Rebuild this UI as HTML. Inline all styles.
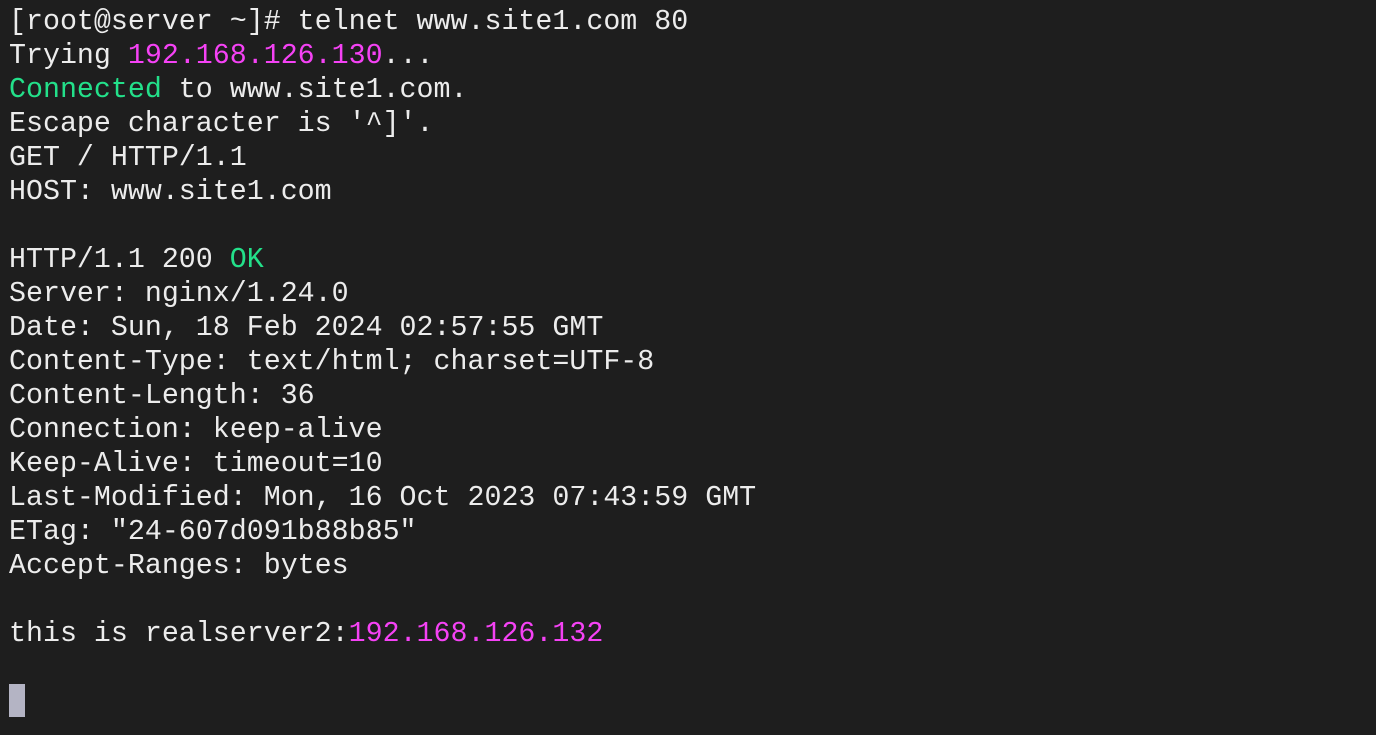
<!DOCTYPE html>
<html><head><style>
html,body{margin:0;padding:0;background:#1e1e1e;width:1376px;height:735px;overflow:hidden}
pre{margin:0;position:absolute;left:9px;top:5px;font-family:"Liberation Mono",monospace;font-size:28.3px;line-height:34px;color:#ececec}
.m{color:#f542f5}.g{color:#23e08a}
.c{position:absolute;left:9px;top:684px;width:16px;height:33px;background:#b4b4c4}
</style></head><body>
<pre>[root@server ~]# telnet www.site1.com 80
Trying <span class="m">192.168.126.130</span>...
<span class="g">Connected</span> to www.site1.com.
Escape character is '^]'.
GET / HTTP/1.1
HOST: www.site1.com

HTTP/1.1 200 <span class="g">OK</span>
Server: nginx/1.24.0
Date: Sun, 18 Feb 2024 02:57:55 GMT
Content-Type: text/html; charset=UTF-8
Content-Length: 36
Connection: keep-alive
Keep-Alive: timeout=10
Last-Modified: Mon, 16 Oct 2023 07:43:59 GMT
ETag: "24-607d091b88b85"
Accept-Ranges: bytes

this is realserver2:<span class="m">192.168.126.132</span>
</pre>
<div class="c"></div>
</body></html>
